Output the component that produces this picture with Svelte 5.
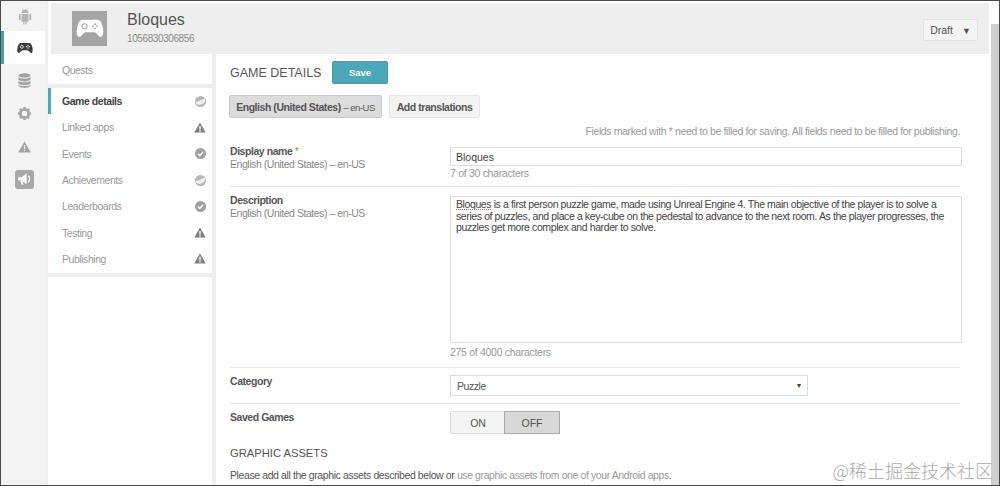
<script>
  const nav = [
    { label: 'Game details', icon: 'part', active: true },
    { label: 'Linked apps', icon: 'warn' },
    { label: 'Events', icon: 'ok' },
    { label: 'Achievements', icon: 'part' },
    { label: 'Leaderboards', icon: 'ok' },
    { label: 'Testing', icon: 'warn' },
    { label: 'Publishing', icon: 'warn' }
  ];
</script>

<div class="page">
  <aside class="rail">
    <div class="rail-item top">
      <svg width="14" height="19" viewBox="0 0 16 20" fill="#b4b4b4"><path d="M4 6a4 4 0 0 1 8 0zM4 7h8v8a1 1 0 0 1-1 1h-1v3H8.600v-3H7.400v3H6v-3H5a1 1 0 0 1-1-1zM1 7h2v7H1zM13 7h2v7h-2zM5 .5l1.500 2-.5.400-1.500-2zM11 .5l-1.500 2 .5.400 1.500-2z"/></svg>
    </div>
    <div class="rail-item on">
      <svg width="16" height="12" viewBox="0 0 16 12"><path fill="#3c3c3c" d="M4 1h8c2 0 3 2 3.500 5 .4 2.500.2 5-1.300 5-1.500 0-2.200-2.700-3.700-2.700H5.500C4 8.300 3.300 11 1.800 11 .3 11 .1 8.500.5 6 1 3 2 1 4 1z"/><circle cx="4.800" cy="4.800" r="1.500" fill="none" stroke="#eee" stroke-width=".9"/><g fill="#eee"><circle cx="11" cy="3.500" r=".7"/><circle cx="11" cy="6.100" r=".7"/><circle cx="9.700" cy="4.800" r=".7"/><circle cx="12.300" cy="4.800" r=".7"/></g></svg>
    </div>
    <div class="rail-item">
      <svg width="13" height="15" viewBox="0 0 14 16" fill="#a0a0a0"><ellipse cx="7" cy="2.500" rx="6.500" ry="2.300"/><path d="M.5 4v2.500C.5 8 3.500 9 7 9s6.500-1 6.500-2.500V4C13 5.500 10 6 7 6S1 5.500.5 4zM.5 8v2.500C.5 12 3.500 13 7 13s6.500-1 6.500-2.500V8C13 9.500 10 10 7 10S1 9.500.5 8zM.5 12v1.500C.5 15 3.500 16 7 16s6.500-1 6.500-2.500V12c-.5 1.500-3.500 2-6.500 2s-6-.5-6.500-2z"/></svg>
    </div>
    <div class="rail-item">
      <svg width="13" height="13" viewBox="0 0 14 14"><circle cx="7" cy="7" r="4.500" fill="none" stroke="#a8a8a8" stroke-width="3"/><path stroke="#a8a8a8" stroke-width="2.600" d="M7 0v4M7 10v4M0 7h4M10 7h4M2 2l2.500 2.500M9.500 9.500 12 12M12 2 9.500 4.500M4.500 9.500 2 12"/></svg>
    </div>
    <div class="rail-item">
      <svg width="13" height="12" viewBox="0 0 14 13"><path fill="#a0a0a0" d="M7 .5 13.800 12.500H.2z"/><rect x="6.300" y="4.500" width="1.400" height="4.500" fill="#eee"/><rect x="6.300" y="9.800" width="1.400" height="1.400" fill="#eee"/></svg>
    </div>
    <div class="rail-item">
      <div class="promo">
        <svg width="15" height="15" viewBox="0 0 14 14" fill="#fff"><path d="M1 5h3l5-3.500v10L4 8H1zM3 8.500h2l1 3.500H4.500z"/><path d="M10.500 3.500c1.600 1.500 1.600 4.500 0 6" fill="none" stroke="#fff" stroke-width="1.200"/></svg>
      </div>
    </div>
  </aside>

  <div class="main">
    <header class="head">
      <div class="tile">
        <svg width="28" height="19" viewBox="0 0 16 11"><path fill="#fff" d="M4 .5h8c2 0 3 2 3.500 4.800.4 2.500.2 5-1.300 5-1.500 0-2.200-2.700-3.700-2.700H5.500C4 7.600 3.300 10.300 1.800 10.300.3 10.300.1 7.800.5 5.300 1 2.500 2 .5 4 .5z"/><circle cx="4.800" cy="4.200" r="1.500" fill="none" stroke="#a5a5a5" stroke-width=".6"/><g fill="#a5a5a5"><circle cx="11" cy="3" r=".55"/><circle cx="11" cy="5.400" r=".55"/><circle cx="9.800" cy="4.200" r=".55"/><circle cx="12.200" cy="4.200" r=".55"/></g></svg>
      </div>
      <div class="app-name">
        <h1>Bloques</h1>
        <p>1056830306856</p>
      </div>
      <button class="draft">Draft <span>▼</span></button>
    </header>

    <div class="body">
      <nav class="side">
        <div class="card quests">Quests</div>
        <ul class="card list">
          {#each nav as item}
            <li class:active={item.active}>
              <span>{item.label}</span>
              {#if item.icon === 'warn'}
                <svg width="12" height="11" viewBox="0 0 14 13"><path fill="#7f7f7f" d="M7 .5 13.800 12.500H.2z"/><rect x="6.200" y="4.500" width="1.600" height="4.500" fill="#fff"/><rect x="6.200" y="9.800" width="1.600" height="1.500" fill="#fff"/></svg>
              {:else if item.icon === 'ok'}
                <svg width="11" height="11" viewBox="0 0 11 11"><circle cx="5.500" cy="5.500" r="5.500" fill="#a0a0a0"/><path d="M3 5.700 4.800 7.400 8 4" fill="none" stroke="#fff" stroke-width="1.400"/></svg>
              {:else}
                <svg width="11" height="11" viewBox="0 0 11 11"><circle cx="5.500" cy="5.500" r="5.500" fill="#b4b4b4"/><path d="M.1 6.500 10 2.500A5.500 5.500 0 0 1 .1 6.500z" fill="#eee"/><path d="M2.500 10.100 9.600 9.100A5.500 5.500 0 0 1 2.500 10.100z" fill="#bbb"/></svg>
              {/if}
            </li>
          {/each}
        </ul>
      </nav>

      <main class="content">
        <div class="title-row">
          <h2>GAME DETAILS</h2>
          <button class="save">Save</button>
        </div>
        <div class="tabs">
          <button class="tab sel">English (United States) <small>– en-US</small></button>
          <button class="tab add">Add translations</button>
        </div>
        <p class="note">Fields marked with * need to be filled for saving. All fields need to be filled for publishing.</p>

        <section class="row r-name">
          <div class="label"><b>Display name <i>*</i></b><span>English (United States) – en-US</span></div>
          <div class="field">
            <div class="input">Bloques</div>
            <p class="count">7 of 30 characters</p>
          </div>
        </section>

        <section class="row r-desc">
          <div class="label"><b>Description</b><span>English (United States) – en-US</span></div>
          <div class="field">
            <div class="input area"><u>Bloques</u> is a first person puzzle game, made using Unreal Engine 4. The main objective of the player is to solve a series of puzzles, and place a key-cube on the pedestal to advance to the next room. As the player progresses, the puzzles get more complex and harder to solve.</div>
            <p class="count">275 of 4000 characters</p>
          </div>
        </section>

        <section class="row r-cat">
          <div class="label"><b>Category</b></div>
          <div class="field">
            <div class="select">Puzzle<span>▼</span></div>
          </div>
        </section>

        <section class="row r-save">
          <div class="label"><b>Saved Games</b></div>
          <div class="toggle"><span>ON</span><span class="off">OFF</span></div>
        </section>

        <h3>GRAPHIC ASSETS</h3>
        <p class="assets">Please add all the graphic assets described below or <a href="#top">use graphic assets from one of your Android apps</a>.</p>
      </main>
    </div>
  </div>

  <div class="scroll"></div>
  <div class="mark">@稀土掘金技术社区</div>
</div>

<style>
  :global(body) { margin: 0; }
  * { box-sizing: border-box; }
  .page {
    position: relative; display: flex; width: 1000px; height: 486px; overflow: hidden;
    border: 1px solid #4a4a4a; background: #fff;
    font-family: "Liberation Sans", Arial, sans-serif; font-size: 10.500px; letter-spacing: -0.45px; color: #777;
  }
  h1, h2, h3, p, ul { margin: 0; padding: 0; font-weight: normal; }
  button { font-family: inherit; cursor: pointer; }

  .rail { width: 47px; flex: none; background: #f3f3f3; border-right: 3px solid #eee; }
  .rail-item { height: 33px; display: flex; align-items: center; justify-content: center; padding-left: 3px; }
  .rail-item.top { height: 30px; }
  .rail-item.on { background: #fff; border-left: 3px solid #4a9aa8; padding-left: 0; }
  .promo { width: 19px; height: 19px; border-radius: 3px; background: #a8a8a8; display: flex; align-items: center; justify-content: center; }

  .main { width: 941px; flex: none; padding-top: 2px; }
  .head { height: 51px; margin-left: 3px; background: #eee; display: flex; align-items: center; padding: 0 11px 0 21px; }
  .tile { width: 35px; height: 35px; background: #a5a5a5; display: flex; align-items: center; justify-content: center; }
  .app-name { margin-left: 20px; flex: 1; margin-top: -2px; }
  h1 { font-size: 16px; line-height: 18px; color: #555; letter-spacing: 0; }
  .app-name p { font-size: 10px; letter-spacing: -0.4px; line-height: 12px; margin-top: 4px; color: #8a8a8a; }
  .draft { width: 55px; height: 22px; margin-top: 2px; background: #f3f3f3; border: 1px solid #e2e2e2; border-radius: 2px; font-size: 10.500px; letter-spacing: 0; color: #555; padding: 0; }
  .draft span { font-size: 9px; margin-left: 6px; }

  .body { display: flex; }
  .side { width: 168px; flex: none; background: #eee; padding-right: 4px; }
  .card { background: #fff; list-style: none; }
  .quests { height: 30px; padding: 10px 0 0 14px; line-height: 13px; color: #999; }
  .list { margin-top: 4px; height: 185px; }
  .side::after { content: ""; display: block; height: 300px; margin-top: 4px; background: #fff; }
  .list li { height: 26.300px; display: flex; align-items: center; justify-content: space-between; padding: 0 6px 0 14px; color: #999; }
  .list li.active { color: #444; font-weight: bold; border-left: 3px solid #4aa8b8; padding-left: 11px; }

  .content { flex: 1; padding: 0 28px 0 14px; position: relative; }
  .title-row { display: flex; align-items: center; height: 23px; margin-top: 7px; }
  h2 { font-size: 12.500px; letter-spacing: 0; color: #555; width: 102px; white-space: nowrap; }
  .save { width: 56px; height: 23px; background: #4aa8b8; color: #fff; border: 1px solid #459eae; border-radius: 2px; font-size: 9.500px; letter-spacing: 0; font-weight: bold; padding: 0; }
  .tabs { display: flex; gap: 7px; margin: 11px 0 0 -1px; }
  .tab { height: 23px; padding: 0; background: #f3f3f3; border: 1px solid #e6e6e6; border-radius: 2px; font-size: 10.500px; letter-spacing: -0.45px; font-weight: bold; color: #555; white-space: nowrap; }
  .tab.sel { width: 153px; background: #dcdcdc; border-color: #c8c8c8; }
  .tab.add { width: 91px; }
  .tab small { font-size: 9.500px; font-weight: normal; }
  .note { margin-top: 7px; margin-right: 2px; line-height: 12px; text-align: right; letter-spacing: -0.37px; color: #999; white-space: nowrap; }

  .row { display: flex; border-top: 1px solid transparent; }
  .label { width: 220px; flex: none; display: flex; flex-direction: column; line-height: 13px; }
  .label b { color: #555; }
  .label i { font-style: normal; font-weight: normal; color: #888; }
  .label span { color: #888; }
  .field { flex: 1; }
  .input { width: 512px; height: 19px; border: 1px solid #ddd; padding: 0 5px; line-height: 18px; color: #444; letter-spacing: 0; }
  .count { margin-top: 1px; line-height: 12px; color: #999; letter-spacing: -0.3px; }
  .r-name { margin-top: 9px; height: 40px; }
  .r-name .label { margin-top: -2px; }
  .r-desc { height: 181px; padding-top: 9px; border-top: 1px solid #e6e6e6; width: 730px; }
  .r-desc .label { margin-top: -2px; }
  .area { height: 147px; padding: 2px 5px; line-height: 11.700px; letter-spacing: -0.4px; }
  .area u { text-decoration: underline dotted #a77; text-underline-offset: 1px; }
  .r-desc .count { margin-top: 3px; }
  .r-cat { height: 36px; padding-top: 7px; border-top: 1px solid #e6e6e6; width: 730px; }
  .select { width: 358px; height: 21px; border: 1px solid #ddd; display: flex; align-items: center; justify-content: space-between; padding: 0 5px 0 6px; color: #555; }
  .select span { font-size: 7px; color: #444; }
  .r-save { height: 41px; padding-top: 7px; border-top: 1px solid #e6e6e6; width: 730px; }
  .toggle { display: flex; width: 110px; height: 23px; border: 1px solid #ddd; border-radius: 2px; letter-spacing: 0; color: #555; }
  .toggle span { flex: 1; display: flex; align-items: center; justify-content: center; background: #f3f3f3; }
  .toggle .off { background: #d8d8d8; border: 1px solid #aaa; margin: -1px; }
  h3 { font-size: 11.200px; letter-spacing: 0; line-height: 14px; color: #555; margin-top: 2px; }
  .assets { margin-top: 9px; line-height: 12px; color: #555; letter-spacing: -0.4px; white-space: nowrap; }
  .assets a { color: #999; text-decoration: none; }

  .scroll { position: absolute; left: 990px; top: 23px; bottom: 0; width: 8px; background: #cfcfcf; }
  .mark { position: absolute; right: 6px; bottom: 4px; font-family: "Noto Sans CJK SC", sans-serif; font-size: 18px; letter-spacing: 0; line-height: 22px; color: #aaa; font-weight: 300; }
</style>
